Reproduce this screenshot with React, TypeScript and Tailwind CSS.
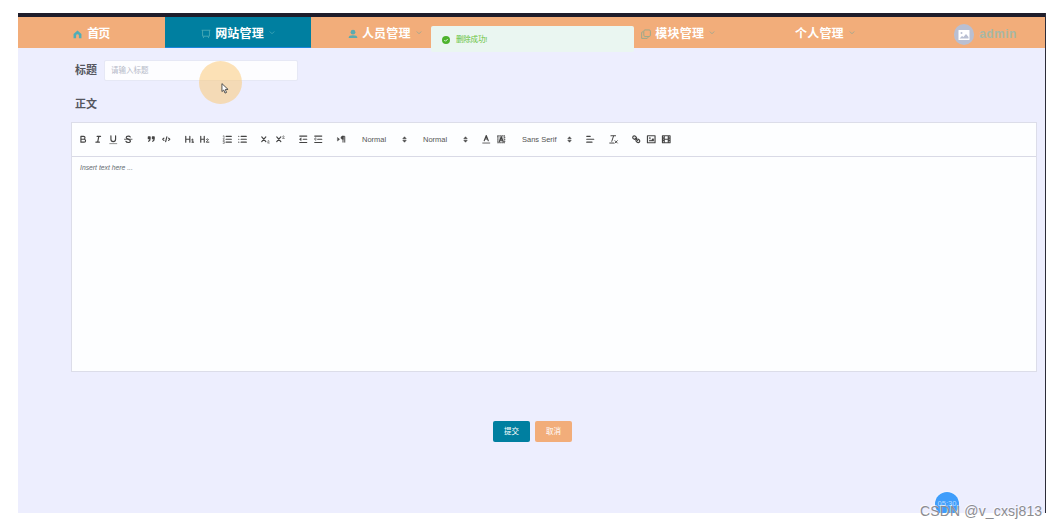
import type React from 'react';

interface NavItemProps {
  label: string;
  icon?: React.ReactNode;
  active?: boolean;
  arrow?: boolean;
  spaced?: boolean;
}

const HomeIcon = () => (
  <svg viewBox="0 0 16 16" className="w-[9px] h-[9px] shrink-0" fill="#4faeb8">
    <path d="M8 1 1 7v7.500h4.500V10a2.500 2.500 0 0 1 5 0v4.500H15V7z" />
  </svg>
);

const BoardIcon = () => (
  <svg viewBox="0 0 16 16" className="w-2.5 h-2.5 shrink-0" fill="none" stroke="#4faeb8" strokeWidth="1.300">
    <path d="M1 2h14M2.500 2v9.500h11V2M5 11.500 3.500 14.500M11 11.500l1.500 3" />
  </svg>
);

const UserIcon = () => (
  <svg viewBox="0 0 16 16" className="w-2.5 h-2.5 shrink-0" fill="#5aabb0">
    <circle cx="8" cy="5" r="3.800" />
    <path d="M1 14.500C1 11 3.500 10 8 10s7 1 7 4.500z" />
  </svg>
);

const CopyIcon = () => (
  <svg viewBox="0 0 16 16" className="w-2.5 h-2.5 shrink-0" fill="none" stroke="#96a98c" strokeWidth="1.500">
    <rect x="4.500" y="1.500" width="10.500" height="10.500" rx="2" />
    <path d="M4 4.500H2.500a1.500 1.500 0 0 0-1.500 1.500v9h9l2-2.500" />
  </svg>
);

const NavItem: React.FC<NavItemProps> = ({ label, icon, active = false, arrow = false, spaced = true }) => (
  <div
    className={`flex items-center justify-center pt-[3px] text-[12px] font-bold text-white ${
      active ? 'bg-[#007fa0] border-b border-[#1c86dc]' : ''
    }`}
  >
    {icon && <span className="mr-1">{icon}</span>}
    <span className={`whitespace-nowrap ${spaced ? 'tracking-[0.200px]' : 'pl-px tracking-[-0.800px]'}`}>{label}</span>
    {arrow && (
      <svg
        viewBox="0 0 8 8"
        className={`w-[6px] h-[6px] ml-[5px] -mt-0.5 ${active ? 'text-[#3da4b5]' : 'text-[#a3a890]'}`}
        fill="none"
        stroke="currentColor"
        strokeWidth="1.300"
      >
        <path d="m1 2 3 3 3-3" />
      </svg>
    )}
  </div>
);

const Tool = ({ children }: { children: React.ReactNode }) => (
  <button type="button" className="w-[15px] h-3.5 flex items-center justify-center">
    <svg
      viewBox="0 0 18 18"
      className="w-[10.500px] h-[10.500px]"
      fill="none"
      stroke="#444"
      strokeWidth="2"
      strokeLinecap="round"
      strokeLinejoin="round"
    >
      {children}
    </svg>
  </button>
);

const Group = ({ children }: { children: React.ReactNode }) => (
  <div className="flex items-center mr-2">{children}</div>
);

const Picker = ({ label, width }: { label: string; width: string }) => (
  <div className={`flex items-center justify-between pl-[5px] pr-[3px] mr-2 text-[7.500px] text-[#555] ${width}`}>
    <span className="whitespace-nowrap">{label}</span>
    <svg viewBox="4 2 10 14" className="w-[5px] h-[7px]" fill="#444">
      <path d="M5.500 7.500 9 3.500l3.500 4zM5.500 10.500 9 14.500l3.500-4z" stroke="#444" strokeWidth="1" />
    </svg>
  </div>
);

const Toolbar = () => (
  <div className="h-[34px] flex items-center pl-1 border-b border-[#d9dae6]">
    <Group>
      <Tool>
        <path d="M5 4h4.500a2.500 2.500 0 0 1 0 5H5zM5 9h5.500a2.500 2.500 0 0 1 0 5H5z" />
      </Tool>
      <Tool>
        <path d="M7 4h6M5 14h6M8 14l2-10" />
      </Tool>
      <Tool>
        <path d="M5 3v6a4 4 0 0 0 8 0V3" />
        <path d="M3 16.500h12" strokeWidth="1" />
      </Tool>
      <Tool>
        <path d="M12.500 5C12 4 10.500 3.500 9 3.500c-2 0-3.500.8-3.500 2.500C5.500 9 12.700 8.500 12.700 12c0 1.700-1.700 2.500-3.700 2.500S5.500 14 5 12.500" />
        <path d="M2.500 9h13" strokeWidth="1.400" />
      </Tool>
    </Group>
    <Group>
      <Tool>
        <path d="M4 5h3v3H4zM11 5h3v3h-3zM7 8c0 2-.6 3.500-2.500 4.500M14 8c0 2-.6 3.500-2.500 4.500" fill="#444" />
      </Tool>
      <Tool>
        <path d="M5 7 3 9l2 2M13 7l2 2-2 2M10 5 8 13" />
      </Tool>
    </Group>
    <Group>
      <Tool>
        <path d="M3 4v10M10 4v10M3 9h7" />
        <path d="M13 10 15 8.500V14M13.500 14h3" strokeWidth="1.700" />
      </Tool>
      <Tool>
        <path d="M3 4v10M9 4v10M3 9h6" />
        <path d="M12.500 9.500c.5-1.500 4-1.500 3.500.5-.3 1-3 2-3.500 4H17" strokeWidth="1.700" />
      </Tool>
    </Group>
    <Group>
      <Tool>
        <path d="M7 4h9M7 9h9M7 14h9" />
        <path d="M2 3.500 3.500 3v3M2 8h2l-2 3h2M2 13h2v3H2" strokeWidth="1" />
      </Tool>
      <Tool>
        <path d="M7 4h9M7 9h9M7 14h9M3 4h.1M3 9h.1M3 14h.1" />
      </Tool>
    </Group>
    <Group>
      <Tool>
        <path d="m3 5 7 8M10 5l-7 8" />
        <path d="M13 12c.4-1 3-1 2.500.5-.2.900-2 1.500-2.500 3h3" strokeWidth="1.100" />
      </Tool>
      <Tool>
        <path d="m3 5 7 8M10 5l-7 8" />
        <path d="M13 4c.4-1 3-1 2.500.5-.2.900-2 1.500-2.500 3h3" strokeWidth="1.100" />
      </Tool>
    </Group>
    <Group>
      <Tool>
        <path d="M3 3.500h12M9 9h6M3 14.500h12" />
        <path d="m5 7-2.500 2L5 11z" fill="#444" strokeWidth="1" />
      </Tool>
      <Tool>
        <path d="M3 3.500h12M8 9h7M3 14.500h12" />
        <path d="M5 7v4L2.500 9z" strokeWidth="1" />
      </Tool>
    </Group>
    <Group>
      <Tool>
        <path d="m3 6.500 3 2.500-3 2.500z" fill="#444" strokeWidth="1" />
        <path d="M12 14V4M15 14V4h-4" strokeWidth="1.700" />
        <path d="M12 4h-1a2.500 2.500 0 0 0 0 5h1z" fill="#444" strokeWidth="1" />
      </Tool>
    </Group>
    <Picker label="Normal" width="w-[53px]" />
    <Picker label="Normal" width="w-[53px]" />
    <Group>
      <Tool>
        <path d="m5.500 11.500 3.500-9 3.500 9M6.700 8.500h4.600" strokeWidth="1.900" />
        <path d="M3 15.500h12" strokeWidth="1.400" />
      </Tool>
      <Tool>
        <path d="M3 3h12v12H3z" fill="#44444444" strokeWidth="1.800" strokeDasharray="1 2.500" />
        <path d="m5.500 13.500 3.500-9 3.500 9M6.700 10.500h4.600" strokeWidth="1.900" />
      </Tool>
    </Group>
    <Picker label="Sans Serif" width="w-[58px]" />
    <Group>
      <Tool>
        <path d="M3 4h6M3 9h12M3 14h9" />
      </Tool>
    </Group>
    <Group>
      <Tool>
        <path d="M5 3h8M6.500 12.500 9.500 3.500M3 15.500h7" strokeWidth="1.700" />
        <path d="m12 11.500 4 4M16 11.500l-4 4" strokeWidth="1.600" />
      </Tool>
    </Group>
    <Group>
      <Tool>
        <path d="m7 7 4.500 4.500" />
        <path d="M9 5.500C7 2 3.500 3 3 5.500c-.4 2 1.400 3.500 3.500 3.800M9 5.500c.8 1 .9 2.500 0 3.500" />
        <path d="M9 12.500c2 3.500 5.500 2.500 6 0 .4-2-1.400-3.500-3.500-3.800M9 12.500c-.8-1-.9-2.500 0-3.500" />
      </Tool>
      <Tool>
        <rect x="2.500" y="3" width="13" height="12" />
        <circle cx="6.500" cy="7" r="0.800" fill="#444" strokeWidth="1" />
        <path d="M5 12.500v-1l2-2 1.500 1.500L12 7l1.500 2v3.500z" fill="#444" stroke="none" />
      </Tool>
      <Tool>
        <path d="M2.500 3h13v12h-13zM5.500 3v12M12.500 3v12M5.500 9h7M2.500 7h2M2.500 11h2M13.500 7h2M13.500 11h2" />
      </Tool>
    </Group>
  </div>
);

const SuccessMessage = () => (
  <div className="absolute left-[413px] top-[13px] w-[203px] h-[26px] flex items-center pl-[11px] pt-px rounded-[2px] bg-[#eaf6f1] text-[7.500px] text-[#67c23a]">
    <svg viewBox="0 0 16 16" className="w-2 h-2 mr-1.5">
      <circle cx="8" cy="8" r="8" fill="#4db32d" />
      <path d="m4.500 8 2.500 2.500 4.500-4.500" fill="none" stroke="#eaf6f1" strokeWidth="1.800" />
    </svg>
    <span className="tracking-[-0.200px]">删除成功!</span>
  </div>
);

const Pointer = () => (
  <div className="absolute left-[181px] top-[48px] w-[43px] h-[43px] rounded-full bg-[#fcc56e]/50">
    <svg viewBox="0 0 12 18" className="absolute left-[22px] top-[22px] w-[8px] h-[11px]" fill="#fff" stroke="#444" strokeWidth="1.500">
      <path d="M1 1v13l3-2.500 2 5 2.500-1-2-5H11z" />
    </svg>
  </div>
);

export default function App() {
  return (
    <div className="relative w-[1057px] h-[528px] overflow-hidden bg-white pt-[13px] pl-[18px] font-['Liberation_Sans','Noto_Sans_CJK_SC',sans-serif]">
      <div className="relative w-[1028px] h-[500px] overflow-hidden bg-[#edeefe] border-r border-[#2c2c38]">
        <div className="h-1 bg-[#1f1d2b]" />
        <nav className="grid grid-cols-7 h-[31px] bg-[#f2ad7a]">
          <NavItem label="首页" icon={<HomeIcon />} spaced={false} />
          <NavItem label="网站管理" icon={<BoardIcon />} active arrow />
          <NavItem label="人员管理" icon={<UserIcon />} arrow />
          <div />
          <NavItem label="模块管理" icon={<CopyIcon />} arrow />
          <NavItem label="个人管理" arrow />
          <div className="flex items-center pl-[56px] pt-1">
            <div className="w-5 h-[21px] rounded-full bg-[#b9bfd2] flex items-center justify-center">
              <svg viewBox="0 0 12 12" className="w-3 h-3">
                <rect x="0.500" y="1" width="11" height="10" rx="0.500" fill="#fff" />
                <circle cx="3.500" cy="4" r="1" fill="#b9bfd2" />
                <path d="m1.500 9.500 2.500-2.500 1.500 1 2.500-3 2.500 3v1.500z" fill="#b9bfd2" />
              </svg>
            </div>
            <span className="ml-[5px] -mt-0.5 leading-[14px] text-[12px] font-bold tracking-[0.400px] text-[#a8b8a6]">admin</span>
          </div>
        </nav>

        <main>
          <div className="flex items-center h-[21px] mt-3 pl-[57px]">
            <label htmlFor="title" className="w-[29px] text-[11px] font-bold text-[#55565e]">
              标题
            </label>
            <input
              id="title"
              placeholder="请输入标题"
              className="w-[194px] h-[21px] px-1.5 rounded-[2px] bg-[#fdfdff] border border-[#e6e8f5] text-[7.500px] placeholder:text-[#b6bac8]"
            />
          </div>
          <h2 className="mt-[15px] pl-[57px] h-4 leading-4 text-[11px] font-bold text-[#55565e]">正文</h2>
          <div className="mt-2.5 ml-[53px] w-[966px] h-[250px] bg-[#fdfeff] border border-[#dcdde9]">
            <Toolbar />
            <p className="pt-1.5 pl-2 text-[6.800px] leading-[10px] italic text-[#666c72]">Insert text here ...</p>
          </div>
          <div className="flex gap-[5px] mt-[49px] pl-[475px] text-[7.500px] text-white">
            <button type="button" className="w-[37px] h-[21px] rounded-[2px] bg-[#007fa0]">
              提交
            </button>
            <button type="button" className="w-[37px] h-[21px] rounded-[2px] bg-[#f2ad7a]">
              取消
            </button>
          </div>
        </main>

        <SuccessMessage />
        <Pointer />
        <div className="absolute left-[917px] top-[479px] w-6 h-6 rounded-full bg-[#3f9dfb] shadow-[0_0_2px_#fff] flex items-center justify-center text-[7.500px] text-[#b9dcff]">
          05:30
        </div>
      </div>
      <span className="absolute left-[920px] top-[503px] text-[14px] leading-4 tracking-[0.150px] whitespace-nowrap text-[#8c8c90] [text-shadow:-1px_-1px_0_#ffffffaa]">
        CSDN @v_cxsj813
      </span>
    </div>
  );
}
